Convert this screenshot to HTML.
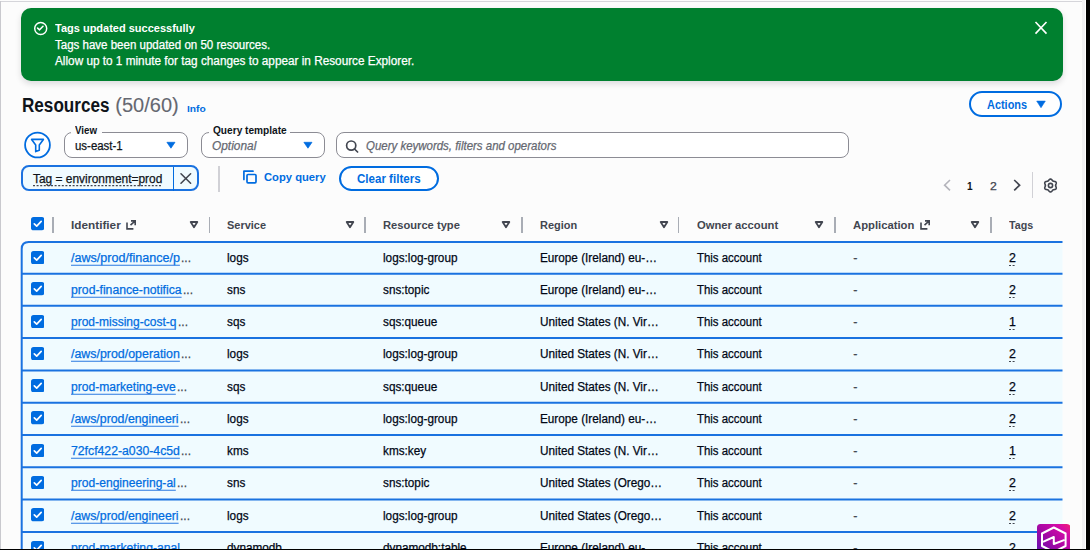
<!DOCTYPE html>
<html><head><meta charset="utf-8">
<style>
*{box-sizing:border-box;margin:0;padding:0}
html,body{width:1090px;height:550px;overflow:hidden;background:#fcfcfc}
body{position:relative;font-family:"Liberation Sans",sans-serif;color:#000716}
.a{position:absolute;white-space:nowrap}
.t{line-height:1;transform-origin:0 0}
.t.n{-webkit-text-stroke:0.25px currentColor}
</style></head><body>
<div class="a " style="left:0;top:0;width:1090px;height:550px;background:#fcfcfc"></div>
<div class="a " style="left:0;top:1px;width:1083px;height:1px;background:#d5d5da"></div>
<div class="a " style="left:0;top:1px;width:1px;height:549px;background:#c9c9ce"></div>
<div class="a " style="left:1082px;top:0;width:2.5px;height:550px;background:#f1f1f3"></div>
<div class="a " style="left:1084.5px;top:0;width:1.5px;height:550px;background:#fefefe"></div>
<div class="a " style="left:21px;top:8px;width:1042px;height:73px;background:#00802f;border-radius:10px;box-shadow:0 3px 6px rgba(0,7,22,.13)"></div>
<svg class="a" style="left:30px;top:18px" width="22" height="22" viewBox="0 0 22 22"><circle cx="10.7" cy="10.5" r="6" fill="none" stroke="#fff" stroke-width="1.45"/><path d="M7.6 10.1 L9.6 11.8 L13 8.3" fill="none" stroke="#fff" stroke-width="1.6" stroke-linecap="round" stroke-linejoin="round"/></svg>
<div class="a t " style="left:54.50px;top:23.00px;font-size:11.8px;font-weight:bold;font-style:normal;color:#fff;transform:scaleX(0.9323);">Tags updated successfully</div>
<div class="a t  n" style="left:54.50px;top:39.00px;font-size:12px;font-weight:normal;font-style:normal;color:#fff;transform:scaleX(0.9600);">Tags have been updated on 50 resources.</div>
<div class="a t  n" style="left:54.50px;top:55.00px;font-size:12px;font-weight:normal;font-style:normal;color:#fff;transform:scaleX(0.9811);">Allow up to 1 minute for tag changes to appear in Resource Explorer.</div>
<svg class="a" style="left:1033px;top:20px" width="16" height="16" viewBox="0 0 16 16"><path d="M2.5 2 L13.5 13.6 M13.5 2 L2.5 13.6" stroke="#fff" stroke-width="1.6"/></svg>
<div class="a t " style="left:22.00px;top:95.00px;font-size:20px;font-weight:bold;font-style:normal;color:#0f141a;transform:scaleX(0.8555);">Resources</div>
<div class="a t  n" style="left:115.30px;top:95.00px;font-size:20px;font-weight:normal;font-style:normal;color:#656871;-webkit-text-stroke:0.1px currentColor;">(50/60)</div>
<div class="a t " style="left:187.10px;top:104.00px;font-size:9.8px;font-weight:bold;font-style:normal;color:#006ce0;transform:scaleX(1.0413);">Info</div>
<div class="a " style="left:968.6px;top:91.2px;width:93.8px;height:26.3px;border:2px solid #006ce0;border-radius:14px;background:#fff"></div>
<div class="a t " style="left:987.00px;top:99.00px;font-size:12.2px;font-weight:bold;font-style:normal;color:#006ce0;transform:scaleX(0.8963);">Actions</div>
<svg class="a" style="left:1036px;top:100px" width="10" height="9" viewBox="0 0 10 9"><path d="M0.7 1.1 H9.3 L5 7.7 Z" fill="#006ce0" stroke="#006ce0" stroke-width=".6" stroke-linejoin="round"/></svg>
<svg class="a" style="left:20px;top:128px" width="36" height="34" viewBox="0 0 36 34"><circle cx="17.5" cy="17" r="12.4" fill="#fff" stroke="#006ce0" stroke-width="1.8"/><path d="M11.6 11.4 H23.4 L19.3 16.9 V22.2 L15.7 23.6 V16.9 Z" fill="none" stroke="#006ce0" stroke-width="1.6" stroke-linejoin="round"/></svg>
<div class="a " style="left:64.1px;top:132.2px;width:124.1px;height:26.3px;border:1px solid #8c8c94;border-radius:8px;background:#fff"></div>
<div class="a " style="left:70.9px;top:130px;width:30.799999999999997px;height:4px;background:#fcfcfc"></div>
<div class="a t " style="left:75.20px;top:126.00px;font-size:10px;font-weight:bold;font-style:normal;color:#0f141a;transform:scaleX(0.9731);">View</div>
<div class="a t  n" style="left:75.10px;top:140.00px;font-size:12.3px;font-weight:normal;font-style:normal;color:#0f141a;transform:scaleX(0.9303);">us-east-1</div>
<svg class="a" style="left:165.7px;top:141px" width="10" height="9" viewBox="0 0 10 9"><path d="M0.9 1.3 H9.0 L4.95 7.2 Z" fill="#006ce0" stroke="#006ce0" stroke-width=".7" stroke-linejoin="round"/></svg>
<div class="a " style="left:201.4px;top:132.2px;width:123.29999999999998px;height:26.3px;border:1px solid #8c8c94;border-radius:8px;background:#fff"></div>
<div class="a " style="left:208.5px;top:130px;width:81.5px;height:4px;background:#fcfcfc"></div>
<div class="a t " style="left:212.70px;top:126.00px;font-size:10px;font-weight:bold;font-style:normal;color:#0f141a;transform:scaleX(1.0123);">Query template</div>
<div class="a t  n" style="left:212.40px;top:140.00px;font-size:12.3px;font-weight:normal;font-style:italic;color:#656871;transform:scaleX(0.9670);">Optional</div>
<svg class="a" style="left:303px;top:141px" width="10" height="9" viewBox="0 0 10 9"><path d="M0.9 1.3 H9.0 L4.95 7.2 Z" fill="#006ce0" stroke="#006ce0" stroke-width=".7" stroke-linejoin="round"/></svg>
<div class="a " style="left:336px;top:132.3px;width:513.2px;height:26.2px;border:1px solid #8c8c94;border-radius:8px;background:#fff"></div>
<svg class="a" style="left:343px;top:138px" width="18" height="16" viewBox="0 0 18 16"><circle cx="8.2" cy="7.6" r="4.6" fill="none" stroke="#424650" stroke-width="1.7"/><path d="M11.5 11 L14.6 14" stroke="#424650" stroke-width="1.7" stroke-linecap="round"/></svg>
<div class="a t  n" style="left:366.30px;top:140.00px;font-size:12.2px;font-weight:normal;font-style:italic;color:#656871;transform:scaleX(0.9406);">Query keywords, filters and operators</div>
<div class="a " style="left:20.6px;top:165.4px;width:178.6px;height:26px;border:2px solid #1a72e0;border-radius:8px;background:#f0fbff"></div>
<div class="a " style="left:172.6px;top:166.5px;width:1.6px;height:24.7px;background:#006ce0"></div>
<div class="a t  n" style="left:33.30px;top:173.00px;font-size:12.6px;font-weight:normal;font-style:normal;color:#0f141a;transform:scaleX(0.9474);">Tag = environment=prod</div>
<svg class="a" style="left:33.3px;top:184px" width="130" height="3" viewBox="0 0 130 3"><path d="M0 1.6 H129.4" stroke="#424650" stroke-width="1.1" stroke-dasharray="2 1.6"/></svg>
<svg class="a" style="left:178px;top:171px" width="15" height="15" viewBox="0 0 15 15"><path d="M3 2.8 L12.6 12.2 M12.6 2.8 L3 12.2" stroke="#424650" stroke-width="1.6" stroke-linecap="round"/></svg>
<div class="a " style="left:218.4px;top:165.5px;width:1.3px;height:26px;background:#d1d1d6"></div>
<svg class="a" style="left:240px;top:168px" width="19" height="18" viewBox="0 0 19 18"><path d="M3.9 11.4 V3.2 H13" fill="none" stroke="#006ce0" stroke-width="1.7" stroke-linecap="round" stroke-linejoin="round"/><rect x="7" y="6.5" width="9" height="8.3" rx="1" fill="none" stroke="#006ce0" stroke-width="1.7"/></svg>
<div class="a t " style="left:263.50px;top:172.00px;font-size:11.4px;font-weight:bold;font-style:normal;color:#006ce0;transform:scaleX(0.9839);">Copy query</div>
<div class="a " style="left:338.7px;top:165.8px;width:100.5px;height:25.4px;border:2px solid #006ce0;border-radius:13px;background:#fff"></div>
<div class="a t " style="left:357.30px;top:173.00px;font-size:12px;font-weight:bold;font-style:normal;color:#006ce0;transform:scaleX(0.9632);">Clear filters</div>
<svg class="a" style="left:940px;top:177px" width="14" height="16" viewBox="0 0 14 16"><path d="M10 3 L4.6 8.2 L10 13.4" fill="none" stroke="#b4b4bb" stroke-width="1.6"/></svg>
<div class="a t " style="left:967.30px;top:181.00px;font-size:11.8px;font-weight:bold;font-style:normal;color:#0f141a;transform:scaleX(0.8533);">1</div>
<div class="a t  n" style="left:990.30px;top:181.00px;font-size:11.8px;font-weight:normal;font-style:normal;color:#424650;transform:scaleX(1.0362);">2</div>
<svg class="a" style="left:1010px;top:177px" width="14" height="16" viewBox="0 0 14 16"><path d="M4.2 3 L9.6 8.2 L4.2 13.4" fill="none" stroke="#424650" stroke-width="1.7"/></svg>
<div class="a " style="left:1032px;top:172.2px;width:1.2px;height:25.6px;background:#d1d1d6"></div>
<svg class="a" style="left:1043.4px;top:177.8px" width="15" height="15" viewBox="0 0 15 15"><path d="M7.50 1.05 L7.92 1.12 L8.32 1.31 L8.67 1.60 L8.99 1.95 L9.26 2.31 L9.51 2.64 L9.76 2.92 L10.02 3.13 L10.34 3.26 L10.70 3.33 L11.11 3.38 L11.57 3.43 L12.02 3.53 L12.45 3.70 L12.82 3.95 L13.09 4.27 L13.24 4.67 L13.27 5.11 L13.20 5.57 L13.05 6.01 L12.88 6.43 L12.71 6.81 L12.59 7.17 L12.55 7.50 L12.59 7.83 L12.71 8.19 L12.88 8.57 L13.05 8.99 L13.20 9.43 L13.27 9.89 L13.24 10.33 L13.09 10.72 L12.82 11.05 L12.45 11.30 L12.02 11.47 L11.57 11.57 L11.11 11.62 L10.70 11.67 L10.34 11.74 L10.02 11.87 L9.76 12.08 L9.51 12.36 L9.26 12.69 L8.99 13.05 L8.67 13.40 L8.32 13.69 L7.92 13.88 L7.50 13.95 L7.08 13.88 L6.68 13.69 L6.33 13.40 L6.01 13.05 L5.74 12.69 L5.49 12.36 L5.24 12.08 L4.98 11.87 L4.66 11.74 L4.30 11.67 L3.89 11.62 L3.43 11.57 L2.98 11.47 L2.55 11.30 L2.18 11.05 L1.91 10.73 L1.76 10.33 L1.73 9.89 L1.80 9.43 L1.95 8.99 L2.12 8.57 L2.29 8.19 L2.41 7.83 L2.45 7.50 L2.41 7.17 L2.29 6.81 L2.12 6.43 L1.95 6.01 L1.80 5.57 L1.73 5.11 L1.76 4.67 L1.91 4.27 L2.18 3.95 L2.55 3.70 L2.98 3.53 L3.43 3.43 L3.89 3.38 L4.30 3.33 L4.66 3.26 L4.97 3.13 L5.24 2.92 L5.49 2.64 L5.74 2.31 L6.01 1.95 L6.33 1.60 L6.68 1.31 L7.08 1.12 Z" fill="none" stroke="#424650" stroke-width="1.6" stroke-linejoin="round"/><circle cx="7.5" cy="7.5" r="2.1" fill="none" stroke="#424650" stroke-width="1.6"/></svg>
<svg class="a" style="left:0px;top:0px" width="1090" height="550" viewBox="0 0 1090 550"><path d="M21.7 550 V249.10 Q21.7 242.10 28.7 242.10 H1062.5 V550 Z" fill="#f0fbff"/><path d="M21.7 550 V249.10 Q21.7 242.10 28.7 242.10 H1062.5" fill="none" stroke="#1a72e0" stroke-width="2"/><path d="M21.7 273.70 H1062.5" fill="none" stroke="#1a72e0" stroke-width="2"/><path d="M21.7 305.85 H1062.5" fill="none" stroke="#1a72e0" stroke-width="2"/><path d="M21.7 338.00 H1062.5" fill="none" stroke="#1a72e0" stroke-width="2"/><path d="M21.7 370.40 H1062.5" fill="none" stroke="#1a72e0" stroke-width="2"/><path d="M21.7 402.65 H1062.5" fill="none" stroke="#1a72e0" stroke-width="2"/><path d="M21.7 435.00 H1062.5" fill="none" stroke="#1a72e0" stroke-width="2"/><path d="M21.7 467.20 H1062.5" fill="none" stroke="#1a72e0" stroke-width="2"/><path d="M21.7 499.55 H1062.5" fill="none" stroke="#1a72e0" stroke-width="2"/><path d="M21.7 531.90 H1062.5" fill="none" stroke="#1a72e0" stroke-width="2"/></svg>
<svg class="a" style="left:31.1px;top:217.3px" width="13.4" height="13.3" viewBox="0 0 13.4 13.3"><rect x="0" y="0" width="13.4" height="13.3" rx="2.6" fill="#006ce0"/><path d="M3.3 6.9 L5.7 9.1 L10.2 4.4" fill="none" stroke="#fff" stroke-width="1.7" stroke-linecap="round" stroke-linejoin="round"/></svg>
<div class="a " style="left:52.2px;top:216.6px;width:1.4px;height:16.1px;background:#a9adb5"></div>
<div class="a t " style="left:70.70px;top:220.00px;font-size:11.4px;font-weight:bold;font-style:normal;color:#424650;transform:scaleX(1.0345);">Identifier</div>
<svg class="a" style="left:124.7px;top:219px" width="12" height="12" viewBox="0 0 12 12"><path d="M2 3.4 V9.9 H8.4 M5.5 6.1 L10.2 1.9 M6 1.9 H10.2 V6.3" fill="none" stroke="#424650" stroke-width="1.6"/></svg>
<svg class="a" style="left:188.7px;top:220px" width="10.5" height="9" viewBox="0 0 10.5 9"><path d="M1.7 2.0 H8.3 L5.0 7.2 Z" fill="none" stroke="#424650" stroke-width="1.8" stroke-linejoin="round"/></svg>
<div class="a " style="left:209.00px;top:216.6px;width:1.4px;height:16.1px;background:#a9adb5"></div>
<div class="a t " style="left:227.00px;top:220.00px;font-size:11.4px;font-weight:bold;font-style:normal;color:#424650;transform:scaleX(0.9613);">Service</div>
<svg class="a" style="left:344.9px;top:220px" width="10.5" height="9" viewBox="0 0 10.5 9"><path d="M1.7 2.0 H8.3 L5.0 7.2 Z" fill="none" stroke="#424650" stroke-width="1.8" stroke-linejoin="round"/></svg>
<div class="a " style="left:364.40px;top:216.6px;width:1.4px;height:16.1px;background:#a9adb5"></div>
<div class="a t " style="left:383.30px;top:220.00px;font-size:11.4px;font-weight:bold;font-style:normal;color:#424650;transform:scaleX(0.9789);">Resource type</div>
<svg class="a" style="left:501.3px;top:220px" width="10.5" height="9" viewBox="0 0 10.5 9"><path d="M1.7 2.0 H8.3 L5.0 7.2 Z" fill="none" stroke="#424650" stroke-width="1.8" stroke-linejoin="round"/></svg>
<div class="a " style="left:521.30px;top:216.6px;width:1.4px;height:16.1px;background:#a9adb5"></div>
<div class="a t " style="left:539.60px;top:220.00px;font-size:11.4px;font-weight:bold;font-style:normal;color:#424650;transform:scaleX(0.9630);">Region</div>
<svg class="a" style="left:658.8px;top:220px" width="10.5" height="9" viewBox="0 0 10.5 9"><path d="M1.7 2.0 H8.3 L5.0 7.2 Z" fill="none" stroke="#424650" stroke-width="1.8" stroke-linejoin="round"/></svg>
<div class="a " style="left:677.90px;top:216.6px;width:1.4px;height:16.1px;background:#a9adb5"></div>
<div class="a t " style="left:696.50px;top:220.00px;font-size:11.4px;font-weight:bold;font-style:normal;color:#424650;transform:scaleX(0.9860);">Owner account</div>
<svg class="a" style="left:813.9px;top:220px" width="10.5" height="9" viewBox="0 0 10.5 9"><path d="M1.7 2.0 H8.3 L5.0 7.2 Z" fill="none" stroke="#424650" stroke-width="1.8" stroke-linejoin="round"/></svg>
<div class="a " style="left:834.20px;top:216.6px;width:1.4px;height:16.1px;background:#a9adb5"></div>
<div class="a t " style="left:852.70px;top:220.00px;font-size:11.4px;font-weight:bold;font-style:normal;color:#424650;transform:scaleX(0.9893);">Application</div>
<svg class="a" style="left:918.8px;top:219px" width="12" height="12" viewBox="0 0 12 12"><path d="M2 3.4 V9.9 H8.4 M5.5 6.1 L10.2 1.9 M6 1.9 H10.2 V6.3" fill="none" stroke="#424650" stroke-width="1.6"/></svg>
<svg class="a" style="left:970.4px;top:220px" width="10.5" height="9" viewBox="0 0 10.5 9"><path d="M1.7 2.0 H8.3 L5.0 7.2 Z" fill="none" stroke="#424650" stroke-width="1.8" stroke-linejoin="round"/></svg>
<div class="a " style="left:990.20px;top:216.6px;width:1.4px;height:16.1px;background:#a9adb5"></div>
<div class="a t " style="left:1008.80px;top:220.00px;font-size:11.4px;font-weight:bold;font-style:normal;color:#424650;transform:scaleX(0.9394);">Tags</div>
<svg class="a" style="left:31.1px;top:250.79999999999998px" width="13.4" height="13.3" viewBox="0 0 13.4 13.3"><rect x="0" y="0" width="13.4" height="13.3" rx="2.6" fill="#006ce0"/><path d="M3.3 6.9 L5.7 9.1 L10.2 4.4" fill="none" stroke="#fff" stroke-width="1.7" stroke-linecap="round" stroke-linejoin="round"/></svg>
<div class="a t  n" style="left:71.00px;top:252.00px;font-size:12.5px;font-weight:normal;font-style:normal;color:#006ce0;transform:scaleX(1.0046);">/aws/prod/finance/p</div>
<svg class="a" style="left:71px;top:264px" width="108.9" height="3" viewBox="0 0 108.9 3"><path d="M0 1.3 H108.9" stroke="#2a78e0" stroke-width="1.1"/></svg>
<div class="a t  n" style="left:181.40px;top:252.00px;font-size:12.5px;font-weight:normal;font-style:normal;color:#424650;transform:scaleX(0.9598);">...</div>
<div class="a t  n" style="left:227.00px;top:252.00px;font-size:12.5px;font-weight:normal;font-style:normal;color:#000716;transform:scaleX(0.9400);">logs</div>
<div class="a t  n" style="left:383.30px;top:252.00px;font-size:12.5px;font-weight:normal;font-style:normal;color:#000716;transform:scaleX(0.9400);">logs:log-group</div>
<div class="a t  n" style="left:539.60px;top:252.00px;font-size:12.5px;font-weight:normal;font-style:normal;color:#000716;transform:scaleX(0.9400);">Europe (Ireland) eu-…</div>
<div class="a t  n" style="left:696.50px;top:252.00px;font-size:12.5px;font-weight:normal;font-style:normal;color:#000716;transform:scaleX(0.9130);">This account</div>
<div class="a t  n" style="left:853.20px;top:252.00px;font-size:12.5px;font-weight:normal;font-style:normal;color:#424650;">-</div>
<div class="a t  n" style="left:1008.80px;top:252.00px;font-size:12.5px;font-weight:normal;font-style:normal;color:#000716;transform:scaleX(0.9925);">2</div>
<svg class="a" style="left:1008.8px;top:264px" width="7" height="3" viewBox="0 0 7 3"><path d="M0 1.5 H7" stroke="#424650" stroke-width="1.1" stroke-dasharray="2 1.6"/></svg>
<svg class="a" style="left:31.1px;top:282.4px" width="13.4" height="13.3" viewBox="0 0 13.4 13.3"><rect x="0" y="0" width="13.4" height="13.3" rx="2.6" fill="#006ce0"/><path d="M3.3 6.9 L5.7 9.1 L10.2 4.4" fill="none" stroke="#fff" stroke-width="1.7" stroke-linecap="round" stroke-linejoin="round"/></svg>
<div class="a t  n" style="left:71.00px;top:284.00px;font-size:12.5px;font-weight:normal;font-style:normal;color:#006ce0;transform:scaleX(0.9765);">prod-finance-notifica</div>
<svg class="a" style="left:71px;top:296px" width="110.6" height="3" viewBox="0 0 110.6 3"><path d="M0 1.3 H110.6" stroke="#2a78e0" stroke-width="1.1"/></svg>
<div class="a t  n" style="left:183.10px;top:284.00px;font-size:12.5px;font-weight:normal;font-style:normal;color:#424650;transform:scaleX(0.9598);">...</div>
<div class="a t  n" style="left:227.00px;top:284.00px;font-size:12.5px;font-weight:normal;font-style:normal;color:#000716;transform:scaleX(0.9400);">sns</div>
<div class="a t  n" style="left:383.30px;top:284.00px;font-size:12.5px;font-weight:normal;font-style:normal;color:#000716;transform:scaleX(0.9400);">sns:topic</div>
<div class="a t  n" style="left:539.60px;top:284.00px;font-size:12.5px;font-weight:normal;font-style:normal;color:#000716;transform:scaleX(0.9400);">Europe (Ireland) eu-…</div>
<div class="a t  n" style="left:696.50px;top:284.00px;font-size:12.5px;font-weight:normal;font-style:normal;color:#000716;transform:scaleX(0.9130);">This account</div>
<div class="a t  n" style="left:853.20px;top:284.00px;font-size:12.5px;font-weight:normal;font-style:normal;color:#424650;">-</div>
<div class="a t  n" style="left:1008.80px;top:284.00px;font-size:12.5px;font-weight:normal;font-style:normal;color:#000716;transform:scaleX(0.9925);">2</div>
<svg class="a" style="left:1008.8px;top:296px" width="7" height="3" viewBox="0 0 7 3"><path d="M0 1.5 H7" stroke="#424650" stroke-width="1.1" stroke-dasharray="2 1.6"/></svg>
<svg class="a" style="left:31.1px;top:314.55px" width="13.4" height="13.3" viewBox="0 0 13.4 13.3"><rect x="0" y="0" width="13.4" height="13.3" rx="2.6" fill="#006ce0"/><path d="M3.3 6.9 L5.7 9.1 L10.2 4.4" fill="none" stroke="#fff" stroke-width="1.7" stroke-linecap="round" stroke-linejoin="round"/></svg>
<div class="a t  n" style="left:71.00px;top:316.00px;font-size:12.5px;font-weight:normal;font-style:normal;color:#006ce0;transform:scaleX(0.9603);">prod-missing-cost-q</div>
<svg class="a" style="left:71px;top:328px" width="105.4" height="3" viewBox="0 0 105.4 3"><path d="M0 1.3 H105.4" stroke="#2a78e0" stroke-width="1.1"/></svg>
<div class="a t  n" style="left:177.90px;top:316.00px;font-size:12.5px;font-weight:normal;font-style:normal;color:#424650;transform:scaleX(0.9598);">...</div>
<div class="a t  n" style="left:227.00px;top:316.00px;font-size:12.5px;font-weight:normal;font-style:normal;color:#000716;transform:scaleX(0.9400);">sqs</div>
<div class="a t  n" style="left:383.30px;top:316.00px;font-size:12.5px;font-weight:normal;font-style:normal;color:#000716;transform:scaleX(0.9400);">sqs:queue</div>
<div class="a t  n" style="left:539.60px;top:316.00px;font-size:12.5px;font-weight:normal;font-style:normal;color:#000716;transform:scaleX(0.9400);">United States (N. Vir…</div>
<div class="a t  n" style="left:696.50px;top:316.00px;font-size:12.5px;font-weight:normal;font-style:normal;color:#000716;transform:scaleX(0.9130);">This account</div>
<div class="a t  n" style="left:853.20px;top:316.00px;font-size:12.5px;font-weight:normal;font-style:normal;color:#424650;">-</div>
<div class="a t  n" style="left:1008.80px;top:316.00px;font-size:12.5px;font-weight:normal;font-style:normal;color:#000716;transform:scaleX(0.9925);">1</div>
<svg class="a" style="left:1008.8px;top:328px" width="7" height="3" viewBox="0 0 7 3"><path d="M0 1.5 H7" stroke="#424650" stroke-width="1.1" stroke-dasharray="2 1.6"/></svg>
<svg class="a" style="left:31.1px;top:346.7px" width="13.4" height="13.3" viewBox="0 0 13.4 13.3"><rect x="0" y="0" width="13.4" height="13.3" rx="2.6" fill="#006ce0"/><path d="M3.3 6.9 L5.7 9.1 L10.2 4.4" fill="none" stroke="#fff" stroke-width="1.7" stroke-linecap="round" stroke-linejoin="round"/></svg>
<div class="a t  n" style="left:71.00px;top:348.00px;font-size:12.5px;font-weight:normal;font-style:normal;color:#006ce0;transform:scaleX(0.9919);">/aws/prod/operation</div>
<svg class="a" style="left:71px;top:360px" width="108.9" height="3" viewBox="0 0 108.9 3"><path d="M0 1.3 H108.9" stroke="#2a78e0" stroke-width="1.1"/></svg>
<div class="a t  n" style="left:181.40px;top:348.00px;font-size:12.5px;font-weight:normal;font-style:normal;color:#424650;transform:scaleX(0.9598);">...</div>
<div class="a t  n" style="left:227.00px;top:348.00px;font-size:12.5px;font-weight:normal;font-style:normal;color:#000716;transform:scaleX(0.9400);">logs</div>
<div class="a t  n" style="left:383.30px;top:348.00px;font-size:12.5px;font-weight:normal;font-style:normal;color:#000716;transform:scaleX(0.9400);">logs:log-group</div>
<div class="a t  n" style="left:539.60px;top:348.00px;font-size:12.5px;font-weight:normal;font-style:normal;color:#000716;transform:scaleX(0.9400);">United States (N. Vir…</div>
<div class="a t  n" style="left:696.50px;top:348.00px;font-size:12.5px;font-weight:normal;font-style:normal;color:#000716;transform:scaleX(0.9130);">This account</div>
<div class="a t  n" style="left:853.20px;top:348.00px;font-size:12.5px;font-weight:normal;font-style:normal;color:#424650;">-</div>
<div class="a t  n" style="left:1008.80px;top:348.00px;font-size:12.5px;font-weight:normal;font-style:normal;color:#000716;transform:scaleX(0.9925);">2</div>
<svg class="a" style="left:1008.8px;top:360px" width="7" height="3" viewBox="0 0 7 3"><path d="M0 1.5 H7" stroke="#424650" stroke-width="1.1" stroke-dasharray="2 1.6"/></svg>
<svg class="a" style="left:31.1px;top:379.09999999999997px" width="13.4" height="13.3" viewBox="0 0 13.4 13.3"><rect x="0" y="0" width="13.4" height="13.3" rx="2.6" fill="#006ce0"/><path d="M3.3 6.9 L5.7 9.1 L10.2 4.4" fill="none" stroke="#fff" stroke-width="1.7" stroke-linecap="round" stroke-linejoin="round"/></svg>
<div class="a t  n" style="left:71.00px;top:381.00px;font-size:12.5px;font-weight:normal;font-style:normal;color:#006ce0;transform:scaleX(0.9670);">prod-marketing-eve</div>
<svg class="a" style="left:71px;top:393px" width="104.8" height="3" viewBox="0 0 104.8 3"><path d="M0 1.3 H104.8" stroke="#2a78e0" stroke-width="1.1"/></svg>
<div class="a t  n" style="left:177.30px;top:381.00px;font-size:12.5px;font-weight:normal;font-style:normal;color:#424650;transform:scaleX(0.9598);">...</div>
<div class="a t  n" style="left:227.00px;top:381.00px;font-size:12.5px;font-weight:normal;font-style:normal;color:#000716;transform:scaleX(0.9400);">sqs</div>
<div class="a t  n" style="left:383.30px;top:381.00px;font-size:12.5px;font-weight:normal;font-style:normal;color:#000716;transform:scaleX(0.9400);">sqs:queue</div>
<div class="a t  n" style="left:539.60px;top:381.00px;font-size:12.5px;font-weight:normal;font-style:normal;color:#000716;transform:scaleX(0.9400);">United States (N. Vir…</div>
<div class="a t  n" style="left:696.50px;top:381.00px;font-size:12.5px;font-weight:normal;font-style:normal;color:#000716;transform:scaleX(0.9130);">This account</div>
<div class="a t  n" style="left:853.20px;top:381.00px;font-size:12.5px;font-weight:normal;font-style:normal;color:#424650;">-</div>
<div class="a t  n" style="left:1008.80px;top:381.00px;font-size:12.5px;font-weight:normal;font-style:normal;color:#000716;transform:scaleX(0.9925);">2</div>
<svg class="a" style="left:1008.8px;top:393px" width="7" height="3" viewBox="0 0 7 3"><path d="M0 1.5 H7" stroke="#424650" stroke-width="1.1" stroke-dasharray="2 1.6"/></svg>
<svg class="a" style="left:31.1px;top:411.34999999999997px" width="13.4" height="13.3" viewBox="0 0 13.4 13.3"><rect x="0" y="0" width="13.4" height="13.3" rx="2.6" fill="#006ce0"/><path d="M3.3 6.9 L5.7 9.1 L10.2 4.4" fill="none" stroke="#fff" stroke-width="1.7" stroke-linecap="round" stroke-linejoin="round"/></svg>
<div class="a t  n" style="left:71.00px;top:413.00px;font-size:12.5px;font-weight:normal;font-style:normal;color:#006ce0;transform:scaleX(0.9863);">/aws/prod/engineeri</div>
<svg class="a" style="left:71px;top:425px" width="107.6" height="3" viewBox="0 0 107.6 3"><path d="M0 1.3 H107.6" stroke="#2a78e0" stroke-width="1.1"/></svg>
<div class="a t  n" style="left:180.10px;top:413.00px;font-size:12.5px;font-weight:normal;font-style:normal;color:#424650;transform:scaleX(0.9598);">...</div>
<div class="a t  n" style="left:227.00px;top:413.00px;font-size:12.5px;font-weight:normal;font-style:normal;color:#000716;transform:scaleX(0.9400);">logs</div>
<div class="a t  n" style="left:383.30px;top:413.00px;font-size:12.5px;font-weight:normal;font-style:normal;color:#000716;transform:scaleX(0.9400);">logs:log-group</div>
<div class="a t  n" style="left:539.60px;top:413.00px;font-size:12.5px;font-weight:normal;font-style:normal;color:#000716;transform:scaleX(0.9400);">Europe (Ireland) eu-…</div>
<div class="a t  n" style="left:696.50px;top:413.00px;font-size:12.5px;font-weight:normal;font-style:normal;color:#000716;transform:scaleX(0.9130);">This account</div>
<div class="a t  n" style="left:853.20px;top:413.00px;font-size:12.5px;font-weight:normal;font-style:normal;color:#424650;">-</div>
<div class="a t  n" style="left:1008.80px;top:413.00px;font-size:12.5px;font-weight:normal;font-style:normal;color:#000716;transform:scaleX(0.9925);">2</div>
<svg class="a" style="left:1008.8px;top:425px" width="7" height="3" viewBox="0 0 7 3"><path d="M0 1.5 H7" stroke="#424650" stroke-width="1.1" stroke-dasharray="2 1.6"/></svg>
<svg class="a" style="left:31.1px;top:443.7px" width="13.4" height="13.3" viewBox="0 0 13.4 13.3"><rect x="0" y="0" width="13.4" height="13.3" rx="2.6" fill="#006ce0"/><path d="M3.3 6.9 L5.7 9.1 L10.2 4.4" fill="none" stroke="#fff" stroke-width="1.7" stroke-linecap="round" stroke-linejoin="round"/></svg>
<div class="a t  n" style="left:71.00px;top:445.00px;font-size:12.5px;font-weight:normal;font-style:normal;color:#006ce0;transform:scaleX(0.9794);">72fcf422-a030-4c5d</div>
<svg class="a" style="left:71px;top:457px" width="108.9" height="3" viewBox="0 0 108.9 3"><path d="M0 1.3 H108.9" stroke="#2a78e0" stroke-width="1.1"/></svg>
<div class="a t  n" style="left:181.40px;top:445.00px;font-size:12.5px;font-weight:normal;font-style:normal;color:#424650;transform:scaleX(0.9598);">...</div>
<div class="a t  n" style="left:227.00px;top:445.00px;font-size:12.5px;font-weight:normal;font-style:normal;color:#000716;transform:scaleX(0.9400);">kms</div>
<div class="a t  n" style="left:383.30px;top:445.00px;font-size:12.5px;font-weight:normal;font-style:normal;color:#000716;transform:scaleX(0.9400);">kms:key</div>
<div class="a t  n" style="left:539.60px;top:445.00px;font-size:12.5px;font-weight:normal;font-style:normal;color:#000716;transform:scaleX(0.9400);">United States (N. Vir…</div>
<div class="a t  n" style="left:696.50px;top:445.00px;font-size:12.5px;font-weight:normal;font-style:normal;color:#000716;transform:scaleX(0.9130);">This account</div>
<div class="a t  n" style="left:853.20px;top:445.00px;font-size:12.5px;font-weight:normal;font-style:normal;color:#424650;">-</div>
<div class="a t  n" style="left:1008.80px;top:445.00px;font-size:12.5px;font-weight:normal;font-style:normal;color:#000716;transform:scaleX(0.9925);">1</div>
<svg class="a" style="left:1008.8px;top:457px" width="7" height="3" viewBox="0 0 7 3"><path d="M0 1.5 H7" stroke="#424650" stroke-width="1.1" stroke-dasharray="2 1.6"/></svg>
<svg class="a" style="left:31.1px;top:475.9px" width="13.4" height="13.3" viewBox="0 0 13.4 13.3"><rect x="0" y="0" width="13.4" height="13.3" rx="2.6" fill="#006ce0"/><path d="M3.3 6.9 L5.7 9.1 L10.2 4.4" fill="none" stroke="#fff" stroke-width="1.7" stroke-linecap="round" stroke-linejoin="round"/></svg>
<div class="a t  n" style="left:71.00px;top:477.00px;font-size:12.5px;font-weight:normal;font-style:normal;color:#006ce0;transform:scaleX(0.9667);">prod-engineering-al</div>
<svg class="a" style="left:71px;top:489px" width="104.8" height="3" viewBox="0 0 104.8 3"><path d="M0 1.3 H104.8" stroke="#2a78e0" stroke-width="1.1"/></svg>
<div class="a t  n" style="left:177.30px;top:477.00px;font-size:12.5px;font-weight:normal;font-style:normal;color:#424650;transform:scaleX(0.9598);">...</div>
<div class="a t  n" style="left:227.00px;top:477.00px;font-size:12.5px;font-weight:normal;font-style:normal;color:#000716;transform:scaleX(0.9400);">sns</div>
<div class="a t  n" style="left:383.30px;top:477.00px;font-size:12.5px;font-weight:normal;font-style:normal;color:#000716;transform:scaleX(0.9400);">sns:topic</div>
<div class="a t  n" style="left:539.60px;top:477.00px;font-size:12.5px;font-weight:normal;font-style:normal;color:#000716;transform:scaleX(0.9400);">United States (Orego…</div>
<div class="a t  n" style="left:696.50px;top:477.00px;font-size:12.5px;font-weight:normal;font-style:normal;color:#000716;transform:scaleX(0.9130);">This account</div>
<div class="a t  n" style="left:853.20px;top:477.00px;font-size:12.5px;font-weight:normal;font-style:normal;color:#424650;">-</div>
<div class="a t  n" style="left:1008.80px;top:477.00px;font-size:12.5px;font-weight:normal;font-style:normal;color:#000716;transform:scaleX(0.9925);">2</div>
<svg class="a" style="left:1008.8px;top:489px" width="7" height="3" viewBox="0 0 7 3"><path d="M0 1.5 H7" stroke="#424650" stroke-width="1.1" stroke-dasharray="2 1.6"/></svg>
<svg class="a" style="left:31.1px;top:508.25px" width="13.4" height="13.3" viewBox="0 0 13.4 13.3"><rect x="0" y="0" width="13.4" height="13.3" rx="2.6" fill="#006ce0"/><path d="M3.3 6.9 L5.7 9.1 L10.2 4.4" fill="none" stroke="#fff" stroke-width="1.7" stroke-linecap="round" stroke-linejoin="round"/></svg>
<div class="a t  n" style="left:71.00px;top:510.00px;font-size:12.5px;font-weight:normal;font-style:normal;color:#006ce0;transform:scaleX(0.9863);">/aws/prod/engineeri</div>
<svg class="a" style="left:71px;top:522px" width="107.6" height="3" viewBox="0 0 107.6 3"><path d="M0 1.3 H107.6" stroke="#2a78e0" stroke-width="1.1"/></svg>
<div class="a t  n" style="left:180.10px;top:510.00px;font-size:12.5px;font-weight:normal;font-style:normal;color:#424650;transform:scaleX(0.9598);">...</div>
<div class="a t  n" style="left:227.00px;top:510.00px;font-size:12.5px;font-weight:normal;font-style:normal;color:#000716;transform:scaleX(0.9400);">logs</div>
<div class="a t  n" style="left:383.30px;top:510.00px;font-size:12.5px;font-weight:normal;font-style:normal;color:#000716;transform:scaleX(0.9400);">logs:log-group</div>
<div class="a t  n" style="left:539.60px;top:510.00px;font-size:12.5px;font-weight:normal;font-style:normal;color:#000716;transform:scaleX(0.9400);">United States (Orego…</div>
<div class="a t  n" style="left:696.50px;top:510.00px;font-size:12.5px;font-weight:normal;font-style:normal;color:#000716;transform:scaleX(0.9130);">This account</div>
<div class="a t  n" style="left:853.20px;top:510.00px;font-size:12.5px;font-weight:normal;font-style:normal;color:#424650;">-</div>
<div class="a t  n" style="left:1008.80px;top:510.00px;font-size:12.5px;font-weight:normal;font-style:normal;color:#000716;transform:scaleX(0.9925);">2</div>
<svg class="a" style="left:1008.8px;top:522px" width="7" height="3" viewBox="0 0 7 3"><path d="M0 1.5 H7" stroke="#424650" stroke-width="1.1" stroke-dasharray="2 1.6"/></svg>
<svg class="a" style="left:31.1px;top:540.6px" width="13.4" height="13.3" viewBox="0 0 13.4 13.3"><rect x="0" y="0" width="13.4" height="13.3" rx="2.6" fill="#006ce0"/><path d="M3.3 6.9 L5.7 9.1 L10.2 4.4" fill="none" stroke="#fff" stroke-width="1.7" stroke-linecap="round" stroke-linejoin="round"/></svg>
<div class="a t  n" style="left:71.00px;top:542.00px;font-size:12.5px;font-weight:normal;font-style:normal;color:#006ce0;transform:scaleX(0.9744);">prod-marketing-anal</div>
<svg class="a" style="left:71px;top:554px" width="109" height="3" viewBox="0 0 109 3"><path d="M0 1.3 H109.0" stroke="#2a78e0" stroke-width="1.1"/></svg>
<div class="a t  n" style="left:181.50px;top:542.00px;font-size:12.5px;font-weight:normal;font-style:normal;color:#424650;transform:scaleX(0.9598);">...</div>
<div class="a t  n" style="left:227.00px;top:542.00px;font-size:12.5px;font-weight:normal;font-style:normal;color:#000716;transform:scaleX(0.9400);">dynamodb</div>
<div class="a t  n" style="left:383.30px;top:542.00px;font-size:12.5px;font-weight:normal;font-style:normal;color:#000716;transform:scaleX(0.9400);">dynamodb:table</div>
<div class="a t  n" style="left:539.60px;top:542.00px;font-size:12.5px;font-weight:normal;font-style:normal;color:#000716;transform:scaleX(0.9400);">Europe (Ireland) eu-…</div>
<div class="a t  n" style="left:696.50px;top:542.00px;font-size:12.5px;font-weight:normal;font-style:normal;color:#000716;transform:scaleX(0.9130);">This account</div>
<div class="a t  n" style="left:853.20px;top:542.00px;font-size:12.5px;font-weight:normal;font-style:normal;color:#424650;">-</div>
<div class="a t  n" style="left:1008.80px;top:542.00px;font-size:12.5px;font-weight:normal;font-style:normal;color:#000716;transform:scaleX(0.9925);">2</div>
<svg class="a" style="left:1008.8px;top:554px" width="7" height="3" viewBox="0 0 7 3"><path d="M0 1.5 H7" stroke="#424650" stroke-width="1.1" stroke-dasharray="2 1.6"/></svg>
<svg class="a" style="left:1036.7px;top:523.9px" width="33.4" height="27" viewBox="0 0 33.4 27"><defs><linearGradient id="lg" x1="0" y1="1" x2="1" y2="0"><stop offset="0" stop-color="#5a14b4"/><stop offset=".45" stop-color="#a008a4"/><stop offset=".8" stop-color="#d40aa8"/><stop offset="1" stop-color="#f22070"/></linearGradient></defs><rect x="0" y="0" width="33.4" height="32" rx="3.5" fill="url(#lg)"/><path d="M16.8 3.5 L28.6 9.5 V22 L16.8 28 L5 22 V9.5 Z" fill="none" stroke="#fff" stroke-width="2" stroke-linejoin="round"/><path d="M6 17.8 L16.8 13 V20 L27.7 15.9" fill="none" stroke="#fff" stroke-width="2" stroke-linejoin="round"/></svg>
<div class="a " style="left:1086px;top:0;width:4px;height:550px;background:#000"></div>
<div class="a " style="left:0;top:549px;width:1090px;height:1px;background:#000"></div>
</body></html>
